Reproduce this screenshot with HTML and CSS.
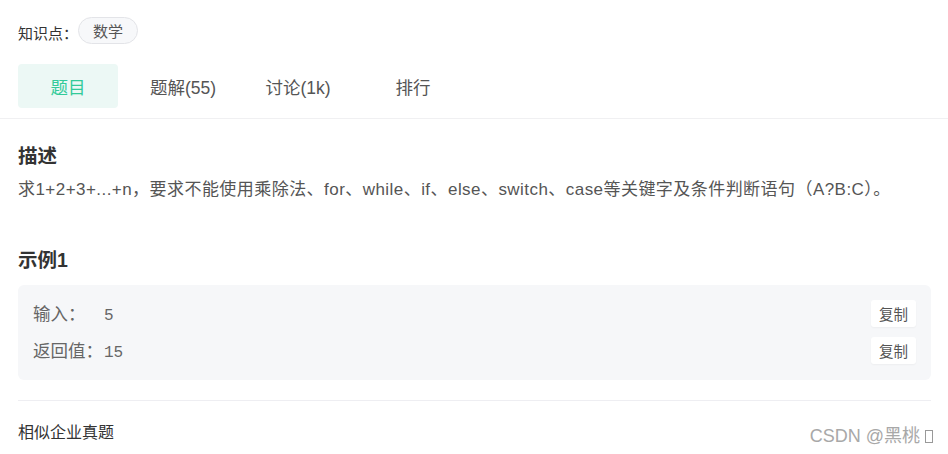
FILE: index.html
```html
<!DOCTYPE html>
<html lang="zh-CN">
<head>
    <meta charset="UTF-8">
    <meta name="viewport" content="width=device-width, initial-scale=1.0">
    <title>求1+2+3+...+n</title>
    <link rel="stylesheet" href="styles.css">
</head>
<body>
    <div class="page">
        <!-- Knowledge tags -->
        <div class="tagRow">
            <span class="tagLabel">知识点：</span>
            <span class="tag">数学</span>
        </div>

        <!-- Tabs -->
        <div class="tabs">
            <div class="tab active">题目</div>
            <div class="tab">题解(55)</div>
            <div class="tab">讨论(1k)</div>
            <div class="tab">排行</div>
        </div>

        <div class="content">
            <h2 class="sectionTitle">描述</h2>
            <p class="desc">求1+2+3+...+n，要求不能使用乘除法、for、while、if、else、switch、case等关键字及条件判断语句（A?B:C）。</p>

            <h2 class="sectionTitle example">示例1</h2>
            <div class="exampleBox">
                <div class="exampleRow">
                    <div class="exText">
                        <span class="exLabel">输入：</span>
                        <span class="exValue">5</span>
                    </div>
                    <button class="copyBtn">复制</button>
                </div>
                <div class="exampleRow">
                    <div class="exText">
                        <span class="exLabel">返回值：</span>
                        <span class="exValue">15</span>
                    </div>
                    <button class="copyBtn">复制</button>
                </div>
            </div>

            <div class="similar">
                <span>相似企业真题</span>
                <span class="watermark">CSDN @黑桃 <i class="tofu"></i></span>
            </div>
        </div>
    </div>
</body>
</html>
```

FILE: styles.css
```css
body {
    margin: 0;
    font-family: "Liberation Sans", "Noto Sans CJK SC", sans-serif;
    color: #333;
    background: #fff;
}

.page {
    width: 948px;
}

.tagRow {
    display: flex;
    align-items: center;
    padding: 17px 18px 0;
    height: 27px;
}

.tagLabel {
    font-size: 15px;
    color: #333;
    margin-top: 3px;
}

.tag {
    display: inline-flex;
    align-items: center;
    justify-content: center;
    box-sizing: border-box;
    width: 60px;
    height: 27px;
    border: 1px solid #e3e4e8;
    border-radius: 14px;
    background-color: #f7f8fa;
    font-size: 15px;
    color: #555;
}

.tabs {
    display: flex;
    gap: 15px;
    padding: 20px 18px 10px;
    height: 44px;
    border-bottom: 1px solid #f0f0f2;
}

.tab {
    width: 100px;
    height: 44px;
    display: flex;
    align-items: center;
    justify-content: center;
    font-size: 17.5px;
    color: #555;
    border-radius: 4px;
}

.tab.active {
    background-color: #ecf8f5;
    color: #32ca99;
}

.content {
    padding: 0 17px 0 18px;
}

.sectionTitle {
    margin: 0;
    padding-top: 24px;
    font-size: 19.5px;
    line-height: 26px;
    font-weight: bold;
    color: #333;
}

.sectionTitle.example {
    padding-top: 45px;
}

.desc {
    margin: 9px 0 0;
    font-size: 17px;
    letter-spacing: 0.45px;
    line-height: 24px;
    color: #555;
}

.exampleBox {
    margin-top: 12px;
    background-color: #f6f7f9;
    border-radius: 6px;
    padding: 14px 15px 16px;
}

.exampleRow {
    display: flex;
    align-items: center;
    height: 28px;
}

.exampleRow + .exampleRow {
    margin-top: 9px;
}

.exText {
    flex: 1;
    display: flex;
    align-items: baseline;
    margin-top: -2px;
}

.exLabel {
    width: 71px;
    font-size: 17.5px;
    color: #666;
}

.exValue {
    font-family: "Liberation Mono", monospace;
    font-size: 16px;
    color: #666;
}

.copyBtn {
    width: 45px;
    height: 27px;
    padding: 0;
    border: none;
    border-radius: 3px;
    background-color: #fff;
    font-family: "Liberation Sans", "Noto Sans CJK SC", sans-serif;
    font-size: 14.5px;
    color: #555;
    box-shadow: 0 1px 2px rgba(0, 0, 0, 0.04);
}

.similar {
    display: flex;
    justify-content: space-between;
    align-items: center;
    margin-top: 20px;
    padding-top: 17px;
    border-top: 1px solid #eeeef2;
    font-size: 16px;
    line-height: 24px;
    color: #333;
}

.watermark {
    font-size: 18px;
    color: #a8a8a8;
    margin-top: 6px;
    margin-right: -2px;
    display: flex;
    align-items: center;
    gap: 5px;
}

.tofu {
    display: inline-block;
    width: 8px;
    height: 13px;
    border: 1px solid #999;
    box-sizing: border-box;
}
```
